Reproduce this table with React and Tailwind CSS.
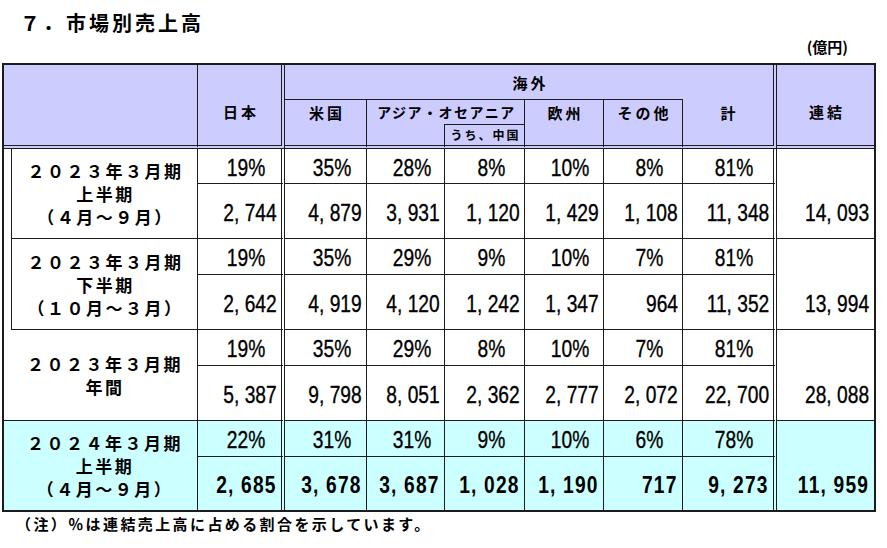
import React from 'react';

const rows = [
  {
    label: ['２０２３年３月期', '上半期', '（４月～９月）'],
    pct: ['19%', '35%', '28%', '8%', '10%', '8%', '81%'],
    val: ['2,744', '4,879', '3,931', '1,120', '1,429', '1,108', '11,348'],
    total: '14,093',
  },
  {
    label: ['２０２３年３月期', '下半期', '（１０月～３月）'],
    pct: ['19%', '35%', '29%', '9%', '10%', '7%', '81%'],
    val: ['2,642', '4,919', '4,120', '1,242', '1,347', '964', '11,352'],
    total: '13,994',
  },
  {
    label: ['２０２３年３月期', '年間'],
    pct: ['19%', '35%', '29%', '8%', '10%', '7%', '81%'],
    val: ['5,387', '9,798', '8,051', '2,362', '2,777', '2,072', '22,700'],
    total: '28,088',
  },
  {
    label: ['２０２４年３月期', '上半期', '（４月～９月）'],
    pct: ['22%', '31%', '31%', '9%', '10%', '6%', '78%'],
    val: ['2,685', '3,678', '3,687', '1,028', '1,190', '717', '9,273'],
    total: '11,959',
  },
];

// grid placement, written out so tailwind picks them up
const colStart = ['col-start-2', 'col-start-3', 'col-start-4', 'col-start-5', 'col-start-6', 'col-start-7', 'col-start-8'];
const pctRow = ['row-start-4', 'row-start-6', 'row-start-8', 'row-start-10'];
const valRow = ['row-start-5', 'row-start-7', 'row-start-9', 'row-start-11'];

const jp = "font-['Noto_Sans_CJK_JP',sans-serif]";
const num = "font-['Liberation_Sans',sans-serif]";
const line = 'border-[#1c1c1c]';
const dblR = 'border-r-4 [border-right-style:double]';
const dblB = 'border-b-4 [border-bottom-style:double]';
const head = 'bg-[#ccccff] font-bold text-black';
const hd = 'text-[15px] tracking-[3px]';

const fmt = (v) => v.replace(',', ', ');

// narrow figures, like the Arial Narrow in the source sheet
function Num({ children, bold, right }) {
  return (
    <span
      className={`inline-block whitespace-nowrap ${num} text-[24px] leading-none text-black scale-x-[0.8] ${right ? 'origin-right' : 'origin-center'} ${bold ? 'font-bold tracking-[1.5px]' : 'font-normal [-webkit-text-stroke:0.35px_black]'}`}
    >
      {children}
    </span>
  );
}

function Label({ lines }) {
  return (
    <div className={`${jp} text-[17px] font-bold tracking-[2.5px] leading-[23px] text-center text-black`}>
      {lines.map((t) => (
        <div key={t}>{t}</div>
      ))}
    </div>
  );
}

function Body() {
  const cells = [];
  rows.forEach((r, g) => {
    const last = g === rows.length - 1;
    const bg = last ? 'bg-[#ccffff]' : 'bg-white';
    r.pct.forEach((p, i) => {
      cells.push(
        <div
          key={`p${g}${i}`}
          className={`${colStart[i]} ${pctRow[g]} ${bg} ${line} border-b ${i === 0 || i === 6 ? dblR : 'border-r'} flex items-center justify-center pl-[13px] pt-[3px]`}
        >
          <Num>{p}</Num>
        </div>
      );
    });
    r.val.forEach((v, i) => {
      cells.push(
        <div
          key={`v${g}${i}`}
          className={`${colStart[i]} ${valRow[g]} ${bg} ${line} ${last ? '' : 'border-b'} ${i === 0 || i === 6 ? dblR : 'border-r'} flex items-center justify-end pr-[4px] pt-[3px]`}
        >
          <Num right bold={last}>{fmt(v)}</Num>
        </div>
      );
    });
    cells.push(
      <div
        key={`t${g}`}
        className={`col-start-9 ${pctRow[g]} row-span-2 ${bg} ${line} ${last ? '' : 'border-b'} flex flex-col justify-end`}
      >
        <div className={`${last ? 'h-[53px]' : 'h-[54px]'} flex items-center justify-end pr-[5px] pt-[3px]`}>
          <Num right bold={last}>{fmt(r.total)}</Num>
        </div>
      </div>
    );
  });
  return cells;
}

export default function App() {
  return (
    <div className={`w-[887px] h-[548px] bg-white ${jp} text-black`}>
      <div className="pl-[20px] pt-[8px] leading-[30px] text-[20px] font-bold tracking-[3px]">７．市場別売上高</div>
      <div className="h-[25px] flex justify-end pr-[39px] text-[15px] font-bold leading-[17px]">(億円)</div>

      <div className={`ml-[2px] w-[874px] border-2 ${line}`}>
        <div className="grid grid-cols-[194px_87px_82px_78px_80px_79px_79px_94px_97px] grid-rows-[34px_25px_25px_35px_55px_36px_55px_36px_55px_36px_53px]">
          {/* header */}
          <div className={`col-start-1 row-start-1 row-span-3 ${head} ${line} border-r ${dblB}`} />
          <div className={`col-start-2 row-start-1 row-span-3 ${head} ${hd} ${line} ${dblR} ${dblB} flex justify-center pt-[36px] pl-[3px]`}>日本</div>
          <div className={`col-start-3 col-span-6 row-start-1 ${head} ${hd} ${line} ${dblR} flex items-center justify-center pt-[2px] pl-[3px]`}>海外</div>
          <div className={`col-start-3 row-start-2 row-span-2 ${head} ${hd} ${line} border-t border-r ${dblB} flex justify-center pt-[2px] pl-[3px]`}>米国</div>
          <div className={`col-start-4 col-span-2 row-start-2 ${head} ${line} border-t border-r flex items-center justify-center whitespace-nowrap text-[14px] tracking-[1.5px] pl-[2px]`}>アジア・オセアニア</div>
          <div className={`col-start-4 row-start-3 ${head} ${line} border-r ${dblB}`} />
          <div className={`col-start-5 row-start-3 ${head} ${line} border-t border-r ${dblB} flex items-center justify-center whitespace-nowrap text-[12px] tracking-[2px] pl-[2px]`}>うち、中国</div>
          <div className={`col-start-6 row-start-2 row-span-2 ${head} ${hd} ${line} border-t border-r ${dblB} flex justify-center pt-[2px] pl-[3px]`}>欧州</div>
          <div className={`col-start-7 row-start-2 row-span-2 ${head} ${hd} ${line} border-t border-r ${dblB} flex justify-center pt-[2px] pl-[3px]`}>その他</div>
          <div className={`col-start-8 row-start-2 row-span-2 ${head} ${hd} ${line} ${dblR} ${dblB} flex justify-center pt-[3px] pl-[3px]`}>計</div>
          <div className={`col-start-9 row-start-1 row-span-3 ${head} ${hd} ${line} ${dblB} flex justify-center pt-[36px] pl-[3px]`}>連結</div>

          {/* first two periods share a nested box in the label column */}
          <div className={`col-start-1 row-start-4 row-span-4 bg-white ${line} border-r pl-[7px] flex flex-col`}>
            <div className={`h-[90px] ${line} border-l border-b flex items-center justify-center pl-[2px]`}>
              <Label lines={rows[0].label} />
            </div>
            <div className={`h-[91px] ${line} border-l border-b flex items-center justify-center pl-[2px]`}>
              <Label lines={rows[1].label} />
            </div>
          </div>
          <div className={`col-start-1 row-start-8 row-span-2 bg-white ${line} border-r border-b flex items-center justify-center pl-[9px]`}>
            <Label lines={rows[2].label} />
          </div>
          <div className={`col-start-1 row-start-10 row-span-2 bg-[#ccffff] ${line} border-r flex items-center justify-center pl-[9px]`}>
            <Label lines={rows[3].label} />
          </div>

          <Body />
        </div>
      </div>

      <div className="pl-[16px] text-[15px] font-bold tracking-[2.4px] leading-[24px]">（注）％は連結売上高に占める割合を示しています。</div>
    </div>
  );
}
